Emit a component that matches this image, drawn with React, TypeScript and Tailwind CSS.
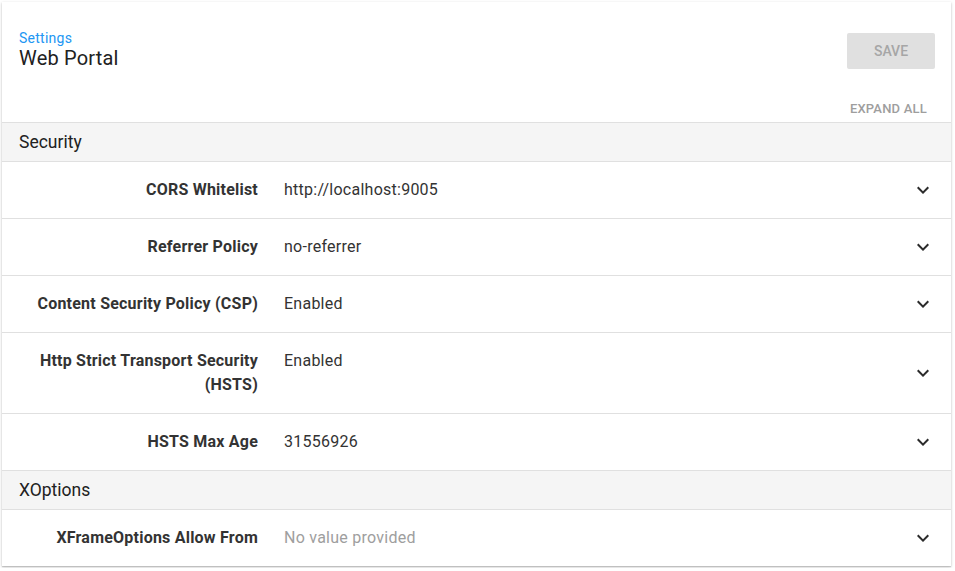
import React from "react";

type Row = { label: string; value: string; empty?: boolean };

const sections: { title: string; rows: Row[] }[] = [
  {
    title: "Security",
    rows: [
      { label: "CORS Whitelist", value: "http://localhost:9005" },
      { label: "Referrer Policy", value: "no-referrer" },
      { label: "Content Security Policy (CSP)", value: "Enabled" },
      { label: "Http Strict Transport Security (HSTS)", value: "Enabled" },
      { label: "HSTS Max Age", value: "31556926" },
    ],
  },
  {
    title: "XOptions",
    rows: [{ label: "XFrameOptions Allow From", value: "No value provided", empty: true }],
  },
];

const ExpandIcon = () => (
  <svg width="24" height="24" viewBox="0 0 24 24" className="shrink-0">
    <path d="M16.59 8.59L12 13.17 7.41 8.59 6 10l6 6 6-6z" fill="#2b2b2b" />
  </svg>
);

const SettingRow = ({ row }: { row: Row }) => (
  <div className="flex items-center border-t border-[#e0e0e0] pr-4">
    <div className="flex flex-1 items-start py-4">
      {/* LABEL */}
      <div className="w-[256px] shrink-0 pl-4 text-right text-[16px] leading-[24px] font-bold tracking-[0.22px] text-[#333]">
        {row.label}
      </div>
      {/* VALUE */}
      <div
        className={
          "ml-[26px] text-[16px] leading-[24px] tracking-[0.25px] " + (row.empty ? "text-[#9e9e9e]" : "text-[#333]")
        }
      >
        {row.value}
      </div>
    </div>
    <ExpandIcon />
  </div>
);

export default function App() {
  return (
    <div className="p-[2px] font-['Roboto',sans-serif]">
      <div className="w-[949px] bg-white shadow-[0_1px_3px_rgba(0,0,0,0.2),0_1px_1px_rgba(0,0,0,0.14)]">
        {/* HEADER */}
        <div className="flex items-start justify-between pl-[17px] pr-4 pt-[28px]">
          <div>
            <div className="text-[14px] leading-[16px] tracking-[0.25px] text-[#2196f3]">Settings</div>
            <div className="text-[20px] leading-[24px] tracking-[0.2px] text-[#212121]">Web Portal</div>
          </div>
          <button className="mt-[3px] h-[36px] w-[88px] rounded-[2px] bg-[#e0e0e0] text-[14px] font-medium text-[#a6a6a6]">
            SAVE
          </button>
        </div>
        <div className="mt-[31px] flex justify-end pr-6 pb-[5px]">
          <span className="text-[13px] leading-[16px] font-medium tracking-[0.2px] text-[#9e9e9e]">EXPAND ALL</span>
        </div>
        {/* SECTIONS */}
        {sections.map(section => (
          <div key={section.title}>
            <div className="flex h-[39px] items-center border-t border-[#e0e0e0] bg-[#f5f5f5] pt-[1px] pl-[17px] text-[17.5px] text-[#212121]">
              {section.title}
            </div>
            {section.rows.map(row => (
              <SettingRow key={row.label} row={row} />
            ))}
          </div>
        ))}
      </div>
    </div>
  );
}
